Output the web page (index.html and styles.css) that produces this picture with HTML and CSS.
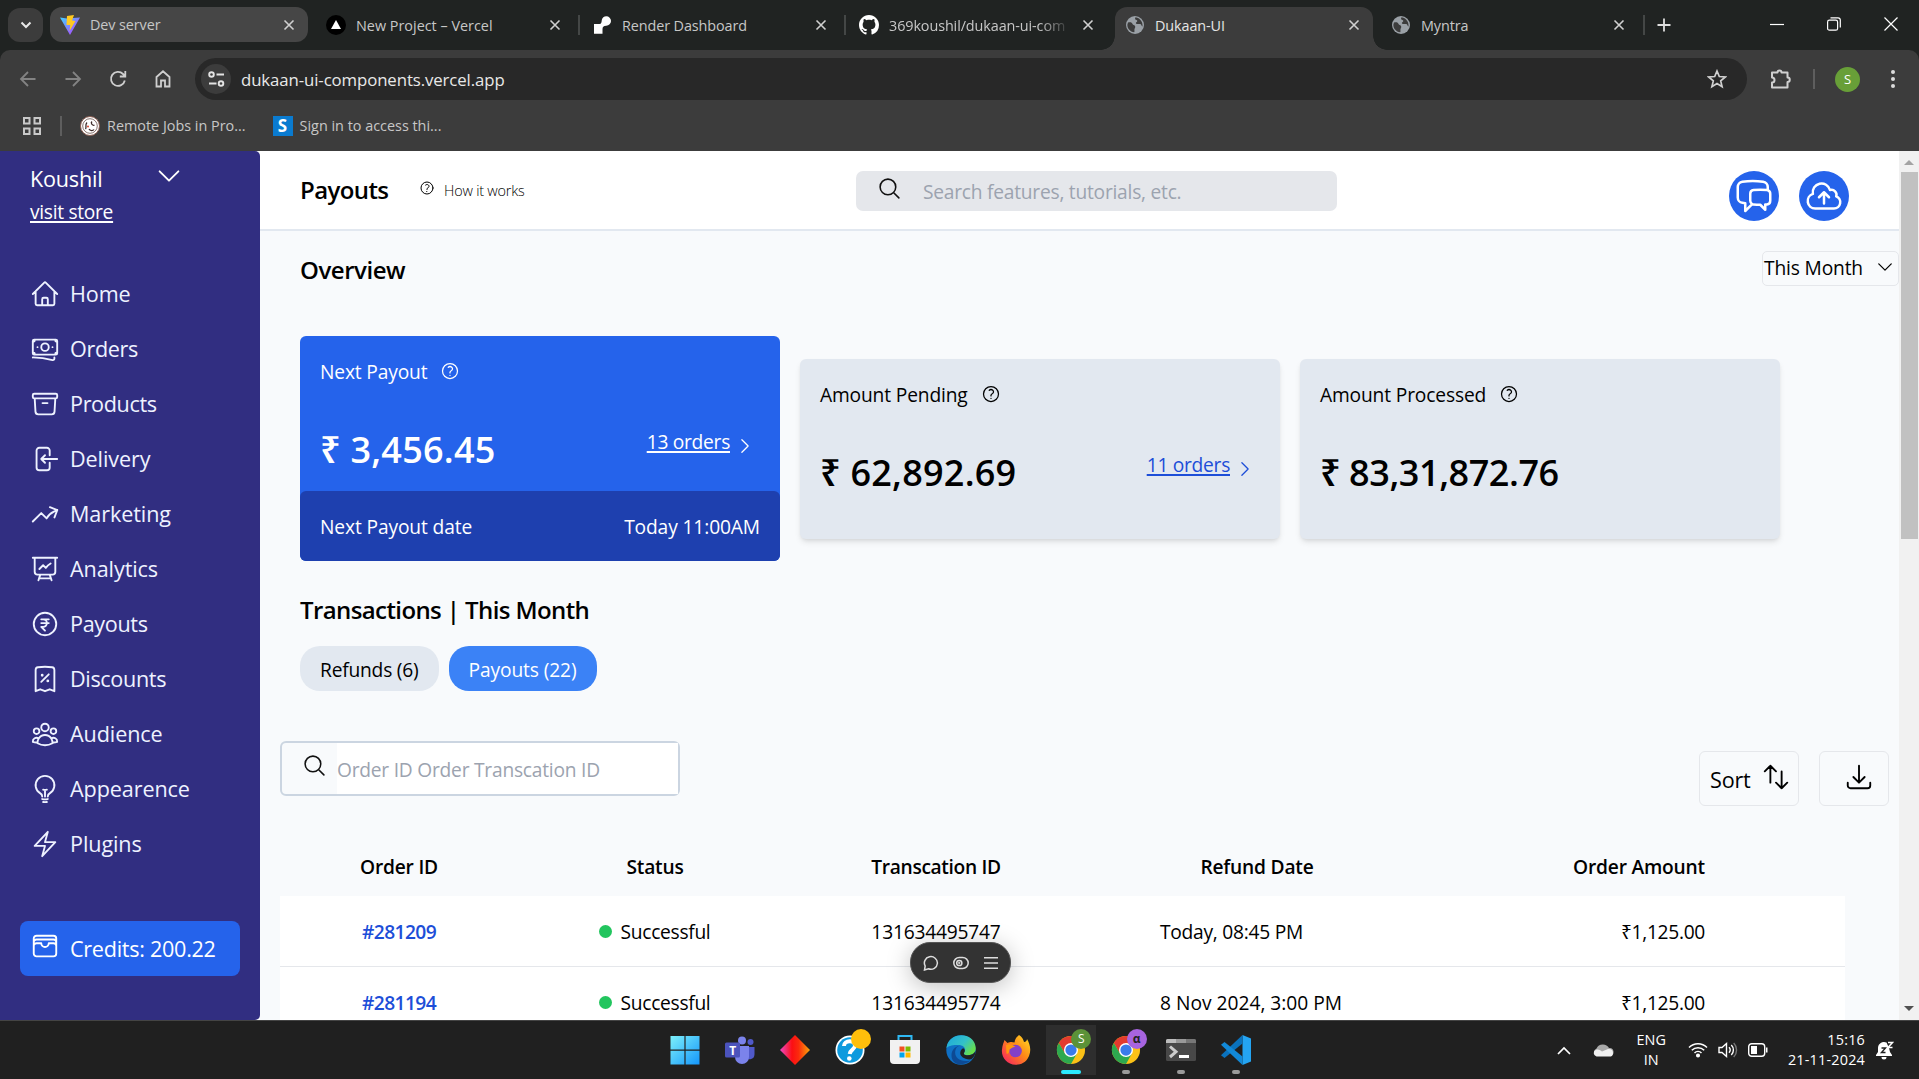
FILE: index.html
```
<!DOCTYPE html>
<html lang="en">
<head>
<meta charset="utf-8">
<title>Dukaan-UI</title>
<link rel="stylesheet" href="styles.css">
</head>
<body>
<svg class="defs" aria-hidden="true">
  <symbol id="close" viewBox="0 0 12 12"><path d="M1.5 1.5l9 9M10.5 1.5l-9 9"/></symbol>
  <symbol id="globe" viewBox="0 0 20 20"><circle cx="10" cy="10" r="9" fill="#9aa0a6"/><path d="M3 7.500c3-.5 4 .2 4.500 1.600.3 1 1.800 1 2.500 1.800.9 1.200-.6 2.400-.6 3.800 0 1 .3 1.800-.2 2.600C5 17 2 13 2.400 9.500zM10.500 2.200c-1 1.300-.3 2.600 1 2.900 1.200.3 1 1.900-.2 2.200-.7.3-.6 1.700.7 1.700h3.300c1.300.3 1 2.400 2.200 2.500.5-3.700-1.500-8.300-7-9.300z" fill="#3c3c3c"/></symbol>
  <symbol id="help" viewBox="0 0 24 24"><path d="M9.879 7.519c1.171-1.025 3.071-1.025 4.242 0 1.172 1.025 1.172 2.687 0 3.712-.203.179-.43.326-.67.442-.745.361-1.450.999-1.450 1.827v.75M21 12a9 9 0 1 1-18 0 9 9 0 0 1 18 0Zm-9 5.250h.008v.008H12v-.008Z"/></symbol>
  <symbol id="search" viewBox="0 0 24 24"><path d="m21 21-5.197-5.197m0 0A7.5 7.5 0 1 0 5.196 5.196a7.5 7.5 0 0 0 10.607 10.607Z"/></symbol>
  <symbol id="chev-down" viewBox="0 0 24 24"><path d="m19.5 8.250-7.500 7.500-7.500-7.500"/></symbol>
  <symbol id="chev-right" viewBox="0 0 24 24"><path d="m8.250 4.500 7.500 7.500-7.500 7.500"/></symbol>
  <symbol id="chrome" viewBox="0 0 32 32"><circle cx="16" cy="16" r="15" fill="#fbc116"/><path d="M3 8.500A15 15 0 0 1 29 8.500H16z" fill="#e33b2e"/><path d="M3 8.500L9.500 19.700 16 16V8.500z" fill="#e33b2e"/><path d="M3 8.500A15 15 0 0 0 16 31l6.300-11.200-12.700-.1z" fill="#2da94f"/><circle cx="16" cy="16" r="7.500" fill="#fff"/><circle cx="16" cy="16" r="6" fill="#3a7bea"/></symbol>
</svg>

<header class="browser">
  <div class="tabstrip">
    <button class="tab-menu"><svg width="12" height="8" viewBox="0 0 12 8"><path d="M1.500 1.500L6 6l4.500-4.500" fill="none" stroke="#e8e8e8" stroke-width="2"/></svg></button>
    <div class="tab hovered"><svg class="fav" viewBox="0 0 20 20"><defs><linearGradient id="vg" x1="0" x2="1" y2="1"><stop stop-color="#41d1ff"/><stop offset="1" stop-color="#bd34fe"/></linearGradient></defs><path d="M0 2.500l7 1 6-.5 7-.5L10 20z" fill="url(#vg)"/><path d="M7 1l7-1-2 5.500 3.500.5L9.500 16l.8-6H6.500z" fill="#ffc920"/></svg><span class="tab-title">Dev server</span><svg class="x"><use href="#close"/></svg></div>
    <i class="sep hidden"></i>
    <div class="tab"><svg class="fav" viewBox="0 0 20 20"><circle cx="10" cy="10" r="10"/><path d="M10 5l5 9H5z" fill="#fff"/></svg><span class="tab-title vercel">New Project – Vercel</span><svg class="x"><use href="#close"/></svg></div>
    <i class="sep"></i>
    <div class="tab"><svg class="fav" viewBox="0 0 20 20"><path d="M2 9h5.500c2 0 2-2 2.300-4C10.200 3 12 1.300 14.300 1.300a4.700 4.700 0 0 1 0 9.400c-3 0-3.800 1.500-3.800 3.500v4.500H2z" fill="#fff"/></svg><span class="tab-title">Render Dashboard</span><svg class="x"><use href="#close"/></svg></div>
    <i class="sep wide"></i>
    <div class="tab"><svg class="fav" viewBox="0 0 16 16"><path fill="#fff" d="M8 0C3.580 0 0 3.580 0 8c0 3.540 2.290 6.530 5.470 7.590.4.070.55-.17.55-.38 0-.19-.01-.82-.01-1.490-2.010.37-2.530-.49-2.690-.94-.09-.23-.48-.94-.82-1.130-.28-.15-.68-.52-.01-.53.63-.01 1.080.58 1.230.82.72 1.210 1.870.87 2.330.66.070-.52.28-.87.51-1.070-1.780-.2-3.640-.89-3.640-3.950 0-.87.31-1.590.82-2.150-.08-.2-.36-1.020.080-2.120 0 0 .67-.21 2.200.82.64-.18 1.320-.27 2-.27s1.360.09 2 .27c1.530-1.040 2.200-.82 2.200-.82.44 1.100.16 1.920.08 2.120.51.56.82 1.270.82 2.150 0 3.070-1.870 3.750-3.650 3.950.29.25.54.73.54 1.480 0 1.070-.01 1.930-.01 2.200 0 .21.15.46.55.38A8.010 8.010 0 0 0 16 8c0-4.420-3.580-8-8-8z"/></svg><span class="tab-title fade">369koushil/dukaan-ui-com</span><svg class="x"><use href="#close"/></svg></div>
    <i class="sep hidden"></i>
    <div class="tab active"><svg class="fav"><use href="#globe"/></svg><span class="tab-title">Dukaan-UI</span><svg class="x"><use href="#close"/></svg></div>
    <i class="sep hidden"></i>
    <div class="tab"><svg class="fav"><use href="#globe"/></svg><span class="tab-title">Myntra</span><svg class="x last"><use href="#close"/></svg></div>
    <i class="sep"></i>
    <svg class="plus" width="14" height="14" viewBox="0 0 14 14"><path d="M7 0.500v13M.5 7h13" stroke="#dedede" stroke-width="1.800"/></svg>
    <div class="window-buttons">
      <svg viewBox="0 0 14 14"><path d="M0 7.500h14" stroke="#fff" stroke-width="1.200"/></svg>
      <svg viewBox="0 0 14 14" fill="none" stroke="#fff" stroke-width="1.200"><rect x=".6" y="3.200" width="10" height="10" rx="1.800"/><path d="M3.500 .8h7.500a2.300 2.300 0 0 1 2.300 2.300v7.500"/></svg>
      <svg viewBox="0 0 14 14"><path d="M.5 .5l13 13M13.500 .5l-13 13" stroke="#fff" stroke-width="1.200"/></svg>
    </div>
  </div>

  <div class="toolbar">
    <div class="nav-buttons">
      <svg class="dim" viewBox="0 0 20 20"><path d="M17.500 10H3M10 3l-7 7 7 7"/></svg>
      <svg class="dim" viewBox="0 0 20 20"><path d="M2.500 10H17M10 3l7 7-7 7"/></svg>
      <svg viewBox="0 0 20 20"><path d="M16.800 11.500A7 7 0 1 1 15 5l2 2M17.300 2v5.500h-5.500"/></svg>
      <svg viewBox="0 0 20 20"><path d="M3.500 8L10 2.300 16.500 8v9.500H12v-6H8v6H3.500z"/></svg>
    </div>
    <div class="omnibox">
      <span class="site-info"><svg width="17" height="16" viewBox="0 0 17 16" fill="none" stroke="#e3e3e3" stroke-width="1.900"><circle cx="3.500" cy="3.500" r="2.300"/><path d="M8.500 3.500H16M1 12.500h7.500"/><circle cx="13" cy="12.500" r="2.300"/></svg></span>
      <span class="url">dukaan-ui-components.vercel.app</span>
      <svg width="20" height="20" viewBox="0 0 20 20"><path d="M10 2l2.300 5.500 6 .5-4.600 3.900 1.400 5.800L10 14.600l-5.100 3.100 1.400-5.800L1.700 8l6-.5z" fill="none" stroke="#d0d0d0" stroke-width="1.700"/></svg>
    </div>
    <svg class="ext" width="22" height="22" viewBox="0 0 22 22"><path d="M2 4.500h5.500a2 2 0 1 1 4 0H17.500V9.500a2 2 0 0 1 0 4.500v5.500H2v-5a2.300 2.300 0 0 0 0-5z" fill="none" stroke="#d0d0d0" stroke-width="2" stroke-linejoin="round"/></svg>
    <i class="bar-sep"></i>
    <span class="avatar">S</span>
    <svg class="dots" width="6" height="20" viewBox="0 0 6 20" fill="#dcdcdc"><circle cx="3" cy="3" r="2"/><circle cx="3" cy="10" r="2"/><circle cx="3" cy="17" r="2"/></svg>
  </div>

  <div class="bookmarks">
    <svg class="apps" width="18" height="18" viewBox="0 0 18 18" fill="none" stroke="#c9c9c9" stroke-width="2"><path d="M1 1h5.500v5.500H1zM11.500 1H17v5.500h-5.500zM1 11.500h5.500V17H1zM11.500 11.500H17V17h-5.500z"/></svg>
    <i class="bm-sep"></i>
    <a class="bookmark"><svg width="20" height="20" viewBox="0 0 20 20"><circle cx="10" cy="10" r="9.500" fill="#fff" stroke="#8b5e52"/><circle cx="10" cy="10" r="7.300" fill="none" stroke="#6b504a" stroke-width=".8"/><path d="M7 6.500c-2.500 2.500 0 4.500-1.500 6.500M12 5.500c-2 2 1 4.500 2.500 3.500M9 13c1 2 4 2 5 .5" fill="none" stroke="#3d2a28" stroke-width="1.300"/><circle cx="8" cy="10.500" r="1" fill="#d9442f"/></svg>Remote Jobs in Pro...</a>
    <a class="bookmark"><b class="s-icon">S</b>Sign in to access thi...</a>
  </div>
</header>

<div class="viewport">
  <aside class="sidebar">
    <div class="store"><div><p class="store-name">Koushil</p><a class="visit">visit store</a></div><svg class="ic30"><use href="#chev-down"/></svg></div>
    <nav class="menu">
      <a><svg class="ic30" viewBox="0 0 24 24"><path d="M2.250 12l8.954-8.955c.44-.439 1.152-.439 1.591 0L21.750 12M4.500 9.750v10.125c0 .621.504 1.125 1.125 1.125H9.750v-4.875c0-.621.504-1.125 1.125-1.125h2.250c.621 0 1.125.504 1.125 1.125V21h4.125c.621 0 1.125-.504 1.125-1.125V9.750M8.250 21h8.250"/></svg>Home</a>
      <a class="tight"><svg class="ic30" viewBox="0 0 24 24"><path d="M2.250 18.750a60.070 60.070 0 0 1 15.797 2.101c.727.198 1.453-.342 1.453-1.096V18.750M3.750 4.500v.75A.75.75 0 0 1 3 6h-.75m0 0v-.375c0-.621.504-1.125 1.125-1.125H20.250M2.250 6v9m18-10.500v.75c0 .414.336.75.75.75h.75m-1.500-1.500h.375c.621 0 1.125.504 1.125 1.125v9.750c0 .621-.504 1.125-1.125 1.125h-.375m1.500-1.500H21a.75.75 0 0 0-.75.75v.75m0 0H3.750m0 0h-.375a1.125 1.125 0 0 1-1.125-1.125V15m1.500 1.500v-.75A.75.75 0 0 0 3 15h-.75M15 10.500a3 3 0 1 1-6 0 3 3 0 0 1 6 0Zm3 0h.008v.008H18V10.500Zm-12 0h.008v.008H6V10.500Z"/></svg>Orders</a>
      <a class="tight"><svg class="ic30" viewBox="0 0 24 24"><path d="m20.250 7.500-.625 10.632a2.250 2.250 0 0 1-2.247 2.118H6.622a2.250 2.250 0 0 1-2.247-2.118L3.750 7.500M10 11.250h4M3.375 7.500h17.250c.621 0 1.125-.504 1.125-1.125v-1.500c0-.621-.504-1.125-1.125-1.125H3.375c-.621 0-1.125.504-1.125 1.125v1.500c0 .621.504 1.125 1.125 1.125Z"/></svg>Products</a>
      <a><svg class="ic30" viewBox="0 0 24 24"><path d="M15.750 9V5.250A2.250 2.250 0 0 0 13.500 3h-6a2.250 2.250 0 0 0-2.250 2.250v13.500A2.250 2.250 0 0 0 7.500 21h6a2.250 2.250 0 0 0 2.250-2.250V15M12 9l-3 3m0 0 3 3m-3-3h12.750"/></svg>Delivery</a>
      <a><svg class="ic30" viewBox="0 0 24 24"><path d="M2.250 18 9 11.250l4.306 4.306a11.950 11.950 0 0 1 5.814-5.518l2.740-1.220m0 0-5.940-2.281m5.940 2.280-2.280 5.941"/></svg>Marketing</a>
      <a><svg class="ic30" viewBox="0 0 24 24"><path d="M3.750 3v11.250A2.250 2.250 0 0 0 6 16.500h2.250M3.750 3h-1.500m1.500 0h16.500m0 0h1.500m-1.500 0v11.250A2.250 2.250 0 0 1 18 16.500h-2.250m-7.500 0h7.500m-7.500 0-1 3m8.500-3 1 3m0 0 .5 1.500m-.5-1.500h-9.500m0 0-.5 1.500m.75-9 3-3 2.148 2.148A12.061 12.061 0 0 1 16.500 7.605"/></svg>Analytics</a>
      <a class="tight"><svg class="ic30" viewBox="0 0 24 24"><path d="M15 8.250H9m6 3H9m3 6-3-3h1.500a3 3 0 1 0 0-6M21 12a9 9 0 1 1-18 0 9 9 0 0 1 18 0Z"/></svg>Payouts</a>
      <a class="tight"><svg class="ic30" viewBox="0 0 24 24"><path d="m9 14.250 6-6m4.500-3.493V21.750l-3.750-1.500-3.750 1.500-3.750-1.500-3.750 1.500V4.757c0-1.108.806-2.057 1.907-2.185a48.507 48.507 0 0 1 11.186 0c1.100.128 1.907 1.077 1.907 2.185ZM9.750 9h.008v.008H9.750V9Zm.375 0a.375.375 0 1 1-.75 0 .375.375 0 0 1 .75 0Zm4.125 4.500h.008v.008h-.008V13.500Zm.375 0a.375.375 0 1 1-.75 0 .375.375 0 0 1 .75 0Z"/></svg>Discounts</a>
      <a><svg class="ic30" viewBox="0 0 24 24"><path d="M18 18.720a9.094 9.094 0 0 0 3.741-.479 3 3 0 0 0-4.682-2.720m.94 3.198.001.031c0 .225-.012.447-.037.666A11.944 11.944 0 0 1 12 21c-2.170 0-4.207-.576-5.963-1.584A6.062 6.062 0 0 1 6 18.719m12 0a5.971 5.971 0 0 0-.941-3.197m0 0A5.995 5.995 0 0 0 12 12.750a5.995 5.995 0 0 0-5.058 2.772m0 0a3 3 0 0 0-4.681 2.720 8.986 8.986 0 0 0 3.740.477m.94-3.197a5.971 5.971 0 0 0-.94 3.197M15 6.750a3 3 0 1 1-6 0 3 3 0 0 1 6 0Zm6 3a2.250 2.250 0 1 1-4.500 0 2.250 2.250 0 0 1 4.500 0Zm-13.500 0a2.250 2.250 0 1 1-4.500 0 2.250 2.250 0 0 1 4.500 0Z"/></svg>Audience</a>
      <a><svg class="ic30" viewBox="0 0 24 24"><path d="M12 18v-5.250m0 0a6.010 6.010 0 0 0 1.500-.189m-1.500.189a6.010 6.010 0 0 1-1.500-.189m3.750 7.478a12.060 12.060 0 0 1-4.500 0m3.750 2.383a14.406 14.406 0 0 1-3 0M14.250 18v-.192c0-.983.658-1.823 1.508-2.316a7.500 7.500 0 1 0-7.517 0c.85.493 1.509 1.333 1.509 2.316V18"/></svg>Appearence</a>
      <a><svg class="ic30" viewBox="0 0 24 24"><path d="m3.750 13.500 10.500-11.250L12 10.500h8.250L9.750 21.750 12 13.500H3.750Z"/></svg>Plugins</a>
    </nav>
    <div class="credits"><svg class="ic30" viewBox="0 0 24 24"><path d="M21 12a2.250 2.250 0 0 0-2.250-2.250H15a3 3 0 1 1-6 0H5.250A2.250 2.250 0 0 0 3 12m18 0v6a2.250 2.250 0 0 1-2.250 2.250H5.250A2.250 2.250 0 0 1 3 18v-6m18 0V9M3 12V9m18 0a2.250 2.250 0 0 0-2.250-2.250H5.250A2.250 2.250 0 0 0 3 9m18 0V6a2.250 2.250 0 0 0-2.250-2.250H5.250A2.250 2.250 0 0 0 3 6v3"/></svg>Credits: 200.22</div>
  </aside>

  <main class="page">
    <header class="page-head">
      <h1>Payouts</h1>
      <a class="how"><svg class="ic16"><use href="#help"/></svg><span>How it works</span></a>
      <div class="feature-search"><svg class="ic25"><use href="#search"/></svg><span>Search features, tutorials, etc.</span></div>
      <div class="head-actions">
        <span class="round"><svg viewBox="0 0 24 24"><path d="M20.250 8.511c.884.284 1.500 1.128 1.500 2.097v4.286c0 1.136-.847 2.100-1.980 2.193-.34.027-.68.052-1.020.072v3.091l-3-3c-1.354 0-2.694-.055-4.020-.163a2.115 2.115 0 0 1-.825-.242m9.345-8.334a2.126 2.126 0 0 0-.476-.095 48.640 48.640 0 0 0-8.048 0c-1.131.094-1.976 1.057-1.976 2.192v4.286c0 .837.46 1.580 1.155 1.951m9.345-8.334V6.637c0-1.621-1.152-3.026-2.760-3.235A48.455 48.455 0 0 0 11.250 3c-2.115 0-4.198.137-6.240.402-1.608.209-2.760 1.614-2.760 3.235v6.226c0 1.621 1.152 3.026 2.760 3.235.577.075 1.157.14 1.740.194V21l4.155-4.155"/></svg></span>
        <span class="round"><svg viewBox="0 0 24 24"><path d="M12 16.500V9.750m0 0 3 3m-3-3-3 3M6.750 19.500a4.500 4.500 0 0 1-1.410-8.775 5.250 5.250 0 0 1 10.233-2.330 3 3 0 0 1 3.758 3.848A3.752 3.752 0 0 1 18 19.500H6.750Z"/></svg></span>
      </div>
    </header>

    <div class="overview-row"><h2>Overview</h2><button class="period"><span>This Month</span><svg class="ic20"><use href="#chev-down"/></svg></button></div>

    <section class="cards">
      <article class="card next">
        <div class="card-body">
          <p class="card-label"><span>Next Payout</span><svg class="ic20"><use href="#help"/></svg></p>
          <div class="card-row"><strong>₹ 3,456.45</strong><a class="orders"><span>13 orders</span><svg class="ic20"><use href="#chev-right"/></svg></a></div>
        </div>
        <div class="card-foot"><span>Next Payout date</span><span>Today 11:00AM</span></div>
      </article>
      <article class="card">
        <p class="card-label"><span>Amount Pending</span><svg class="ic20"><use href="#help"/></svg></p>
        <div class="card-row"><strong>₹ 62,892.69</strong><a class="orders"><span>11 orders</span><svg class="ic20"><use href="#chev-right"/></svg></a></div>
      </article>
      <article class="card">
        <p class="card-label"><span>Amount Processed</span><svg class="ic20"><use href="#help"/></svg></p>
        <div class="card-row"><strong class="long">₹ 83,31,872.76</strong></div>
      </article>
    </section>

    <h2 class="tx-title">Transactions | This Month</h2>
    <div class="pills"><span class="pill">Refunds (6)</span><span class="pill on">Payouts (22)</span></div>

    <div class="filters">
      <div class="order-search"><svg class="ic25"><use href="#search"/></svg><span>Order ID Order Transcation ID</span></div>
      <div class="filter-actions">
        <button class="sort"><span>Sort</span><svg class="ic30" viewBox="0 0 24 24"><path d="M3 7.500 7.500 3m0 0L12 7.500M7.500 3v13.500m13.500 0L16.500 21m0 0L12 16.500m4.500 4.500V7.500"/></svg></button>
        <button class="download"><svg class="ic30" viewBox="0 0 24 24"><path d="M3 16.500v2.250A2.250 2.250 0 0 0 5.250 21h13.500A2.250 2.250 0 0 0 21 18.750V16.500M16.500 12 12 16.500m0 0L7.500 12m4.500 4.500V3"/></svg></button>
      </div>
    </div>

    <div class="table">
      <div class="tr th"><span>Order ID</span><span>Status</span><span class="tid">Transcation ID</span><span>Refund Date</span><span class="amount">Order Amount</span></div>
      <div class="tr"><a class="oid">#281209</a><span class="status"><i></i>Successful</span><span>131634495747</span><span class="date">Today, 08:45 PM</span><span class="amount num">₹1,125.00</span></div>
      <div class="tr"><a class="oid">#281194</a><span class="status"><i></i>Successful</span><span>131634495774</span><span class="date wide">8 Nov 2024, 3:00 PM</span><span class="amount num">₹1,125.00</span></div>
    </div>
  </main>

  <div class="scrollbar"><i class="up"></i><i class="thumb"></i><i class="down"></i></div>

  <div class="float-bar">
    <svg viewBox="0 0 16 16"><path d="M1.500 15l.7-4A6.500 6.300 0 1 1 5.500 13.800z"/></svg>
    <svg viewBox="0 0 16 16"><rect x=".8" y="2.500" width="14.400" height="11" rx="5.500"/><circle cx="6.300" cy="8" r="2.600"/><circle cx="6.300" cy="8" r=".4"/></svg>
    <svg viewBox="0 0 16 16"><path d="M1 2.700h14M1 8h14M1 13.300h14"/></svg>
  </div>
</div>

<footer class="taskbar">
  <span></span>
  <div class="apps-row">
    <span class="app"><svg viewBox="0 0 30 30"><defs><linearGradient id="wg" x2="1" y2="1"><stop stop-color="#7df0fb"/><stop offset="1" stop-color="#1496fb"/></linearGradient></defs><path d="M.5 1H14.400v13.600H.5zM15.600 1H29.500v13.600H15.600zM.5 15.800H14.400v13.700H.5zM15.600 15.800H29.500v13.700H15.600z" fill="url(#wg)"/></svg></span>
    <span class="app"><svg viewBox="0 0 30 30"><circle cx="17" cy="5.500" r="4" fill="#7b83eb"/><circle cx="25.500" cy="7" r="3" fill="#5059c9"/><path d="M20 12h9.500v7.500a5 5 0 0 1-9.500 2z" fill="#5059c9"/><path d="M10 11h14v11a7 7 0 0 1-14 0z" fill="#7b83eb"/><rect x="0" y="7.500" width="15" height="15" rx="1.500" fill="#4b53bc"/><text x="7.500" y="19.800" class="t-letter">T</text></svg></span>
    <span class="app"><svg viewBox="0 0 30 30"><defs><linearGradient id="rg"><stop stop-color="#ee4bc8"/><stop offset=".4" stop-color="#fb0f14"/><stop offset=".62" stop-color="#fb2b0c"/><stop offset="1" stop-color="#f9a60c"/></linearGradient></defs><path d="M15 0l15 15-15 15L0 15z" fill="url(#rg)"/></svg></span>
    <span class="app"><svg viewBox="0 0 30 30"><circle cx="15" cy="15" r="14.500" fill="#fff"/><circle cx="15" cy="15" r="12.800" fill="#0d9ade"/><path d="M9 11c0-6 11-6.500 11-.5 0 4-4.800 4-5.300 8.500" fill="none" stroke="#fff" stroke-width="4"/><circle cx="14.300" cy="23.500" r="2.300" fill="#fff"/></svg><b class="badge yellow"></b></span>
    <span class="app"><svg viewBox="0 0 30 30"><path d="M8.500 6V1h13v5" fill="none" stroke="#2fb9f4" stroke-width="2"/><path d="M0 5h30v20a4 4 0 0 1-4 4H4a4 4 0 0 1-4-4z" fill="#f1f1f1"/><path d="M9.500 11.500h5v5h-5z" fill="#f25022"/><path d="M15.500 11.500h5v5h-5z" fill="#7fba00"/><path d="M9.500 17.500h5v5h-5z" fill="#00a4ef"/><path d="M15.500 17.500h5v5h-5z" fill="#ffb900"/></svg></span>
    <span class="app"><svg viewBox="0 0 30 30"><defs><linearGradient id="eg" y2=".6"><stop stop-color="#1ca5dc"/><stop offset=".6" stop-color="#33c1c9"/><stop offset="1" stop-color="#67de4c"/></linearGradient></defs><circle cx="15" cy="15" r="14.700" fill="#0f6fc4"/><path d="M.5 13C2-4 29-4 29.700 13c.3 5-3.700 7.300-8 7.300-3.700 0-4.500-1.300-3.200-3.300 2-3.500-1-7-6-7C7 9.500 2 11 .5 13z" fill="url(#eg)"/><path d="M9.500 15c-2 7 4 13 15 10.500-8 6.500-19 4.500-19-5C5.500 15 9 11.500 13 11c-2 .8-3 2-3.500 4z" fill="#0d4a94"/><path d="M18.500 17c-1.300 2-.5 3.300 3.200 3.300 3.300 0 6.300-1.300 7.600-4 .3 3-1.300 6-4 8-6 1-12-3-11-7 .3-2 1.500-3.500 3-4 1.500.7 2 2.500 1.200 3.700z" fill="#202020"/></svg></span>
    <span class="app"><svg viewBox="0 0 30 30"><defs><linearGradient id="fg" x1="1" x2="0" y2="1"><stop stop-color="#ffe226"/><stop offset=".45" stop-color="#ff8a16"/><stop offset="1" stop-color="#f5156c"/></linearGradient></defs><path d="M18 0c3 2 4.500 4.500 5 7 2 0 3-2 3-3 3 5 4.500 11 2 17C25 28 19 30 14.500 29.700 6 29.500 0 22 1 14.500 1.300 10 3 7 3.500 5l3 3c3-1.500 5-1 7-.5C14 4 16 1.500 18 0z" fill="url(#fg)"/><circle cx="14.500" cy="16" r="6.300" fill="#8440c8"/><path d="M5 10c4-2 7 0 9.500 2-3.500 0-4 1.500-6 2.500 0 4-2 5-3 4z" fill="#ff980e"/></svg></span>
    <span class="app current"><svg><use href="#chrome"/></svg><b class="badge green">S</b></span>
    <span class="app running"><svg><use href="#chrome"/></svg><b class="badge purple">α</b></span>
    <span class="app running"><svg viewBox="0 0 30 30"><rect y="4" width="30" height="22" rx="1.500" fill="#484848"/><path d="M0 8V5.500A1.500 1.500 0 0 1 1.500 4H10v4z" fill="#bdbdbd"/><path d="M10 4h10v4H10z" fill="#999"/><path d="M20 4h8.500A1.500 1.500 0 0 1 30 5.500V8H20z" fill="#777"/><path d="M4 11.500l6 5.300-6 5.200" fill="none" stroke="#ccc" stroke-width="3"/><path d="M13 21.500h10" stroke="#fff" stroke-width="3"/></svg></span>
    <span class="app running"><svg viewBox="0 0 30 30"><path d="M21.500 0L30 3.500v23L21.500 30z" fill="#24a4f2"/><path d="M21.500 0v8.500L3.500 23 0 20.300z" fill="#0a72bd"/><path d="M21.500 30v-8.500L3.500 7 0 9.700z" fill="#1289d8"/></svg></span>
  </div>
  <div class="tray">
    <svg width="14" height="9" viewBox="0 0 14 9"><path d="M1 8l6-6 6 6" fill="none" stroke="#fff" stroke-width="1.700"/></svg>
    <svg class="cloud" width="21" height="14" viewBox="0 0 21 14"><path d="M4 13a4 4 0 0 1-.5-7.500A7 7 0 0 1 16 5a4 4 0 0 1 1 8z" fill="#a9a9a9"/><path d="M3.500 13.500A3.500 3.500 0 0 1 3 6.800c2-1 4 0 6 1.700l6-2.500c3-.5 5 1 5 4s-2 3.500-3 3.500z" fill="#efefef"/></svg>
    <span class="lang">ENG<br>IN</span>
    <svg class="wifi" width="20" height="16" viewBox="0 0 20 16" fill="none" stroke="#fff" stroke-width="1.500"><path d="M1 5.500a12.500 12.500 0 0 1 18 0M3.800 8.300a8.700 8.700 0 0 1 12.400 0M6.500 11a5 5 0 0 1 7 0"/><circle cx="10" cy="13.500" r="1.300" fill="#fff"/></svg>
    <svg class="vol" width="20" height="18" viewBox="0 0 20 18" fill="none" stroke="#fff" stroke-width="1.400"><path d="M1 6.500h3L8.500 2.500v13L4 11.500H1z"/><path d="M11 6.300a4 4 0 0 1 0 5.400M13.300 4a7 7 0 0 1 0 10"/><path d="M15.700 2a10 10 0 0 1 0 14" stroke="#777"/></svg>
    <svg class="bat" width="20" height="14" viewBox="0 0 20 14"><rect x=".7" y=".7" width="16" height="12.600" rx="3" fill="none" stroke="#fff" stroke-width="1.400"/><rect x="3" y="3" width="6" height="8" fill="#fff"/><path d="M18 4.500h1.500v5H18z" fill="#fff"/></svg>
    <span class="clock">15:16<br>21-11-2024</span>
    <svg class="bell" width="18" height="19" viewBox="0 0 18 19"><path d="M0 14l2-3V7a6 6 0 0 1 8.500-5.500L13 7l1 4 2 3v1H0zM5.500 16h5a2.500 2.500 0 0 1-5 0z" fill="#fff"/><path d="M5.500 7h4l-4 4.500h4" fill="none" stroke="#202020" stroke-width="1.400"/><path d="M12 1.500h4.500L12 6.500h4.500" fill="none" stroke="#fff" stroke-width="1.500"/></svg>
  </div>
</footer>
</body>
</html>
```
FILE: styles.css
```
* { box-sizing: border-box; }
body {
  margin: 0; width: 1919px; height: 1079px; overflow: hidden;
  display: flex; flex-direction: column;
  font-family: "Open Sans", "Noto Sans", sans-serif;
  font-size: 19.2px; line-height: 30px; letter-spacing: -0.2px; color: #000;
}
h1, h2, p { margin: 0; }
button { font: inherit; letter-spacing: inherit; color: inherit; background: none; border: 0; padding: 0; }
svg { display: block; flex: none; }
.defs { position: absolute; width: 0; height: 0; }

/* Browser chrome */
.browser { height: 151px; background: #202322; flex: none; color: #c7c7c7; font-size: 14.4px; letter-spacing: -0.1px; line-height: 20px; }
.tabstrip { height: 50px; display: flex; align-items: flex-start; padding: 7px 0 0 8px; }
.tab-menu { width: 35px; height: 34px; margin: 1px 7px 0 0; border-radius: 12px; background: #3c3c3c; display: flex; align-items: center; justify-content: center; }
.tab { position: relative; width: 258px; height: 36px; padding: 0 13px 0 10px; border-radius: 12px; display: flex; align-items: center; flex: none; }
.tab.hovered { height: 35px; background: #464646; }
.tab.active { height: 43px; padding-bottom: 7px; border-radius: 12px 12px 0 0; background: #3c3c3c; color: #e6e6e6; }
.tab.active::before, .tab.active::after { content: ""; position: absolute; bottom: 0; width: 14px; height: 14px; }
.tab.active::before { left: -14px; background: radial-gradient(circle at 0 0, transparent 13.5px, #3c3c3c 14px); }
.tab.active::after { right: -14px; background: radial-gradient(circle at 100% 0, transparent 13.5px, #3c3c3c 14px); }
.fav { width: 20px; height: 20px; margin-right: 10px; }
.tab-title { flex: 1; white-space: nowrap; padding-top: 1px; }
.tab-title.vercel { letter-spacing: 0; }
.fade { -webkit-mask-image: linear-gradient(90deg, #000 150px, transparent 182px); mask-image: linear-gradient(90deg, #000 150px, transparent 182px); }
.x { width: 12px; height: 12px; stroke: #d0d0d0; stroke-width: 1.600; }
.x.last { margin-right: 1px; }
.sep { width: 2px; height: 20px; margin: 8px 2px 0 4px; background: #444746; flex: none; }
.sep.wide { margin-right: 3px; }
.sep.hidden { visibility: hidden; }
.plus { margin: 11px 0 0 10px; }
.window-buttons { margin: 10px 21px 0 auto; display: flex; gap: 43px; }
.window-buttons svg { width: 14px; height: 14px; }
.toolbar { height: 58px; background: #3c3c3c; border-radius: 10px 10px 0 0; display: flex; align-items: center; padding: 0 23px 0 18px; }
.nav-buttons { display: flex; gap: 25px; }
.nav-buttons svg { width: 20px; height: 20px; fill: none; stroke: #cfcfcf; stroke-width: 1.800; }
.nav-buttons .dim { stroke: #838383; }
.omnibox { margin-left: 22px; width: 1552px; height: 42px; border-radius: 21px; background: #282828; display: flex; align-items: center; padding: 0 20px 0 6px; }
.site-info { width: 30px; height: 30px; border-radius: 50%; background: #3c3c3c; display: flex; align-items: center; justify-content: center; }
.url { flex: 1; margin-left: 10px; padding-top: 1px; font-size: 16.8px; letter-spacing: -0.1px; color: #e8e8e8; }
.ext { margin-left: 23px; }
.bar-sep { width: 2px; height: 20px; margin: 0 20px 0 21px; background: #5e5e5e; }
.avatar { width: 25px; height: 25px; border-radius: 50%; background: #689f38; color: #fff; font-size: 13px; line-height: 25px; text-align: center; }
.dots { margin-left: auto; }
.bookmarks { height: 43px; background: #3c3c3c; display: flex; align-items: center; padding: 0 0 7px 23px; letter-spacing: 0; }
.bm-sep { width: 2px; height: 20px; margin: 0 18px 0 19px; background: #5e5e5e; }
.bookmark { display: flex; align-items: center; gap: 7px; margin-right: 27px; }
.s-icon { width: 20px; height: 20px; background: #0a7bd0; color: #fff; font-size: 17px; line-height: 20px; text-align: center; }

/* Web page */
.viewport { position: relative; height: 869px; flex: none; display: flex; overflow: hidden; background: #f8fafc; }
.ic16, .ic20, .ic25, .ic30, .round svg { fill: none; stroke: currentColor; stroke-width: 1.500; stroke-linecap: round; stroke-linejoin: round; }
.ic16 { width: 16px; height: 16px; }
.ic20 { width: 20px; height: 20px; }
.ic25 { width: 25px; height: 25px; }
.ic30 { width: 30px; height: 30px; }
.sidebar { width: 260px; flex: none; background: #312e81; border-radius: 0 5px 5px 0; padding: 10px 20px 0; color: #eef2ff; font-size: 21.600px; line-height: 35px; letter-spacing: -0.100px; }
.store { height: 105px; padding-left: 10px; display: flex; color: #fff; }
.store > div { width: 124px; }
.store-name { height: 35px; letter-spacing: -0.200px; }
.visit { display: block; margin-top: -2px; font-size: 19.200px; letter-spacing: -0.300px; text-decoration: underline; text-decoration-thickness: 2px; text-underline-offset: 2px; }
.menu a { height: 55px; padding-left: 10px; display: flex; align-items: center; gap: 10px; }
.menu .tight { letter-spacing: -0.350px; }
.credits { height: 55px; margin-top: 50px; padding-left: 10px; border-radius: 8px; background: #2563eb; color: #fff; display: flex; align-items: center; gap: 10px; letter-spacing: -0.280px; }
.credits svg { margin-bottom: 5px; }

.page { width: 1639px; flex: none; }
.page-head { height: 80px; background: #fff; border-bottom: 2px solid #e2e8f0; display: flex; align-items: center; padding: 0 50px 0 40px; }
h1, h2 { font-size: 24px; line-height: 35px; font-weight: 600; letter-spacing: -0.450px; }
.page-head h1 { width: 119px; letter-spacing: -0.600px; margin-top: -2px; }
.how { display: flex; align-items: center; gap: 9px; font-weight: 300; font-size: 14.400px; width: 427px; }
.how svg { margin-bottom: 4px; }
.how span { padding-top: 2px; }
.feature-search { margin: 2px 0 0 10px; width: 481px; height: 40px; border-radius: 7px; background: #e5e7eb; display: flex; align-items: center; padding-left: 21px; color: #9ca3af; letter-spacing: -0.240px; }
.feature-search svg { margin: 0 21px 5px 0; color: #111; }
.feature-search span { padding-top: 2px; }
.head-actions { margin-left: auto; display: flex; gap: 20px; padding-top: 12px; }
.round { width: 50px; height: 50px; border-radius: 50%; background: #2563eb; color: #fff; padding: 5px; }
.round svg { width: 40px; height: 40px; }
.overview-row { display: flex; justify-content: space-between; padding: 20px 0 0 40px; height: 105px; }
.overview-row h2 { padding-top: 1px; }
.period { width: 137px; height: 35px; border: 1px solid #e5e7eb; border-radius: 5px; display: flex; justify-content: space-between; align-items: center; padding: 0 3px 0 1px; letter-spacing: -0.150px; }
.period span { margin-top: -2px; }
.period svg { margin-bottom: 3px; }
.cards { height: 225px; display: flex; align-items: center; gap: 20px; padding-left: 40px; }
.card { width: 480px; height: 180px; padding: 20px; border-radius: 6px; background: #e2e8f0; box-shadow: 0 4px 6px -1px rgba(0,0,0,.1), 0 2px 4px -2px rgba(0,0,0,.1); }
.card.next { height: 225px; padding: 0; background: #2563eb; color: #fff; box-shadow: none; display: flex; flex-direction: column; }
.card-body { height: 155px; padding: 20px; }
.card-label { height: 30px; display: flex; align-items: center; gap: 13px; letter-spacing: -0.150px; }
.card-label span { padding-top: 2px; }
.card-row { display: flex; justify-content: space-between; margin-top: 34px; }
.card-row strong { font-size: 36px; line-height: 60px; font-weight: 600; letter-spacing: 0.250px; }
.card-row .long { letter-spacing: -0.420px; }
.orders { display: flex; gap: 5px; padding-right: 5px; padding-top: 7px; letter-spacing: -0.280px; }
.orders span { text-decoration: underline; text-decoration-thickness: 2px; text-underline-offset: 2px; }
.orders svg { margin-top: 9px; }
.card:not(.next) .orders { color: #1d4ed8; }
.card-foot { height: 70px; padding: 2px 20px 0; border-radius: 6px; background: #1e40af; display: flex; align-items: center; justify-content: space-between; letter-spacing: -0.120px; }
.tx-title { padding: 31px 0 0 40px; height: 85px; letter-spacing: -0.600px; }
.pills { display: flex; gap: 10px; padding-left: 40px; }
.pill { height: 45px; padding: 0 20px; line-height: 47px; border-radius: 20px; background: #e2e8f0; }
.pill.on { background: #3b82f6; color: #fff; width: 148px; letter-spacing: -0.120px; }
.filters { display: flex; justify-content: space-between; padding: 50px 10px 0 20px; height: 146px; }
.order-search { width: 400px; height: 55px; border: 2px solid #cbd5e1; border-radius: 6px; display: flex; align-items: center; padding-left: 20px; color: #9ca3af; letter-spacing: -0.230px; }
.order-search svg { margin: 0 10px 7px 0; color: #111; }
.order-search span { flex: 1; height: 51px; line-height: 53px; background: #fff; }
.filter-actions { display: flex; gap: 20px; padding-top: 10px; }
.filter-actions button { height: 55px; border: 1px solid #e5e7eb; border-radius: 6px; display: flex; align-items: center; }
.filter-actions svg { margin-bottom: 3px; }
.sort { width: 100px; padding: 0 7px 0 10px; justify-content: space-between; font-size: 21.600px; }
.sort span { padding-top: 2px; }
.download { width: 70px; justify-content: flex-end; padding-right: 14px; }
.table { margin-left: 20px; width: 1565px; }
.tr { height: 71px; padding-top: 2px; background: #fff; border-bottom: 1px solid #e5e7eb; display: grid; grid-template-columns: 238px 274px 288px 354px 411px; align-items: center; text-align: center; }
.tr.th { height: 59px; padding-top: 1px; background: none; border: 0; font-weight: 600; }
.tid { letter-spacing: -0.350px; }
.oid { color: #1d4ed8; font-weight: 600; letter-spacing: -0.600px; }
.status { display: flex; justify-content: center; align-items: center; gap: 9px; letter-spacing: -0.300px; padding-right: 1px; }
.status i { width: 13px; height: 13px; margin-bottom: 2px; border-radius: 50%; background: #22c55e; }
.date { text-align: left; padding-left: 80px; letter-spacing: -0.250px; }
.date.wide { letter-spacing: 0; }
.amount { text-align: right; padding-right: 140px; }
.num { letter-spacing: -0.300px; }

.scrollbar { width: 20px; background: #f1f1f1; display: flex; flex-direction: column; align-items: center; }
.scrollbar .up { border: 5px solid transparent; border-top: 0; border-bottom-color: #a3a3a3; margin: 9px 0 7px; }
.scrollbar .thumb { width: 17px; height: 367px; background: #c1c1c1; }
.scrollbar .down { border: 5px solid transparent; border-bottom: 0; border-top-color: #505050; margin: auto 0 9px; }
.float-bar { position: absolute; left: 910px; top: 791px; width: 101px; height: 41px; border-radius: 20px; background: #333; border: 1px solid #555; box-shadow: 0 4px 24px rgba(0,0,0,.25); display: flex; align-items: center; justify-content: center; gap: 14px; }
.float-bar svg { width: 16px; height: 16px; fill: none; stroke: #ddd; stroke-width: 1.500; }

/* Taskbar */
.taskbar { height: 59px; border-top: 1px solid #444; background: #202020; display: grid; grid-template-columns: 657px 608px 1fr; align-items: center; color: #fff; font-size: 14.400px; line-height: 20px; }
.apps-row { display: flex; height: 58px; }
.app { position: relative; width: 55.200px; height: 58px; display: flex; justify-content: center; align-items: center; flex: none; }
.app > svg { width: 30px; height: 30px; }
.current { background: linear-gradient(#2e2e2e, #2e2e2e) center / 50px 50px no-repeat; }
.app.current::after, .app.running::after { content: ""; position: absolute; bottom: 5px; width: 8px; height: 4px; border-radius: 2px; background: #9a9a9a; }
.app.current::after { width: 20px; background: #2ceaff; }
.badge { position: absolute; left: 28px; top: 8px; width: 20px; height: 20px; border-radius: 50%; font-size: 12px; font-weight: 400; text-align: center; }
.yellow { background: #ffbf0b; }
.green { background: #5c9238; }
.purple { background: #a864e0; color: #222; font-weight: 700; }
.t-letter { font: 700 12px "Open Sans", sans-serif; fill: #fff; text-anchor: middle; }
.tray { display: flex; align-items: center; justify-content: flex-end; padding-right: 25px; letter-spacing: 0; }
.cloud { margin-left: 22px; }
.lang { margin-left: 23px; text-align: center; }
.wifi { margin-left: 22px; }
.vol { margin-left: 10px; }
.bat { margin-left: 10px; }
.clock { margin-left: 20px; text-align: right; letter-spacing: 0.200px; }
.bell { margin-left: 11px; }
```
